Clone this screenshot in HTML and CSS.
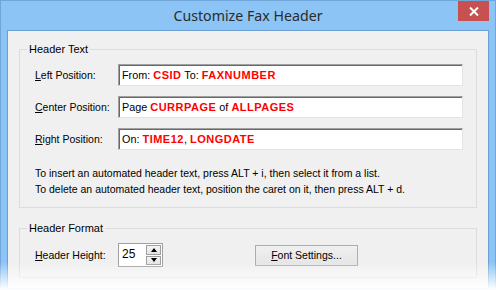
FILE: index.html
```html
<!DOCTYPE html>
<html lang="en">
<head>
    <meta charset="UTF-8">
    <title>Customize Fax Header</title>
    <link rel="stylesheet" href="styles.css">
</head>
<body>
    <div class="window">
        <div class="titlebar">
            <span></span>
            <span class="title">Customize Fax Header</span>
            <button class="close" title="Close">
                <svg width="10" height="9" viewBox="0 0 10 9">
                    <path d="M1 0.5 L9 8.5 M9 0.5 L1 8.5" stroke="#fff" stroke-width="2"/>
                </svg>
            </button>
        </div>

        <div class="client">
            <fieldset class="group">
                <legend>Header Text</legend>
                <div class="fields">
                    <label><u>L</u>eft Position:</label>
                    <div class="edit">From: <b>CSID</b> To: <b>FAXNUMBER</b></div>

                    <label><u>C</u>enter Position:</label>
                    <div class="edit">Page <b>CURRPAGE</b> of <b>ALLPAGES</b></div>

                    <label><u>R</u>ight Position:</label>
                    <div class="edit">On: <b>TIME12</b>, <b>LONGDATE</b></div>
                </div>
                <p class="hint">
                    To insert an automated header text, press ALT + i, then select it from a list.<br>
                    To delete an automated header text, position the caret on it, then press ALT + d.
                </p>
            </fieldset>

            <fieldset class="group">
                <legend>Header Format</legend>
                <div class="format">
                    <label><u>H</u>eader Height:</label>
                    <div class="spin">
                        <span class="spin-value">25</span>
                        <span class="spin-buttons">
                            <span class="spin-btn"><i class="arrow up"></i></span>
                            <span class="spin-btn"><i class="arrow down"></i></span>
                        </span>
                    </div>
                    <button class="push"><u>F</u>ont Settings...</button>
                </div>
            </fieldset>
        </div>

        <div class="fade"></div>
    </div>
</body>
</html>
```

FILE: styles.css
```css
body {
    margin: 0;
    width: 496px;
    height: 290px;
    overflow: hidden;
    font-family: "Liberation Sans", Arial, sans-serif;
    font-size: 10.5px;
    color: #000;
}
.window {
    position: relative;
    box-sizing: border-box;
    height: 290px;
    background-color: #8cc4f6;
    border: 1px solid #70a6da;
    padding: 0 6px;
    display: flex;
    flex-direction: column;
}
.titlebar {
    height: 29px;
    display: grid;
    grid-template-columns: 1fr auto 1fr;
    align-items: start;
}
.title {
    font-family: "Noto Sans", sans-serif;
    font-size: 14.2px;
    color: #2b2b2b;
    line-height: 29px;
}
.close {
    justify-self: end;
    width: 31px;
    height: 20px;
    margin: 0;
    padding: 0;
    border: none;
    background-color: #c75050;
    display: flex;
    align-items: center;
    justify-content: center;
}
.client {
    flex: 1;
    background-color: #f0f0f0;
    border: 1px solid #6e9fd2;
    padding: 12px 11px 0 11px;
}
.group {
    margin: 0;
    border: 1px solid #dcdcdc;
    padding: 8px 13px 10px 15px;
}
.group + .group {
    margin-top: 14px;
}
.group legend {
    padding: 0 2px;
    margin-left: -8px;
    line-height: 13px;
    font-size: 11px;
}
.fields {
    display: grid;
    grid-template-columns: 83px 1fr;
    grid-auto-rows: 22px;
    row-gap: 10px;
    align-items: center;
}
.edit {
    box-sizing: border-box;
    height: 22px;
    background-color: #fff;
    border-top: 1px solid #a0a0a0;
    border-left: 1px solid #a0a0a0;
    border-right: 1px solid #e3e3e3;
    border-bottom: 1px solid #e3e3e3;
    box-shadow: inset 1px 1px 0 #696969;
    padding: 0 3px;
    line-height: 20px;
    white-space: nowrap;
    font-size: 10.8px;
}
.edit b {
    color: #ff0000;
    font-size: 11px;
    letter-spacing: 0.5px;
}
.hint {
    margin: 15px 0 0 0;
    line-height: 16px;
}
.format {
    display: flex;
    align-items: center;
    height: 24px;
}
.format label {
    width: 83px;
}
.spin {
    box-sizing: border-box;
    width: 45px;
    height: 24px;
    background-color: #fff;
    border: 1px solid #a0a0a0;
    display: flex;
    align-items: stretch;
}
.spin-value {
    flex: 1;
    padding: 0 3px;
    line-height: 20px;
    font-size: 12px;
}
.spin-buttons {
    display: flex;
    flex-direction: column;
    gap: 1px;
    padding: 1px;
}
.spin-btn {
    box-sizing: border-box;
    width: 15px;
    flex: 1;
    border: 1px solid #a0a0a0;
    background: linear-gradient(#f4f4f4, #e4e4e4);
    display: flex;
    align-items: center;
    justify-content: center;
}
.arrow {
    width: 0;
    height: 0;
    border-left: 3.5px solid transparent;
    border-right: 3.5px solid transparent;
}
.arrow.up {
    border-bottom: 4px solid #000;
}
.arrow.down {
    border-top: 4px solid #000;
}
.push {
    margin-left: 92px;
    width: 103px;
    height: 21px;
    padding: 0;
    border: 1px solid #adadad;
    background: linear-gradient(#f0f0f0, #e5e5e5);
    font-family: inherit;
    font-size: 10.5px;
    color: #000;
}
.fade {
    position: absolute;
    left: -1px;
    right: -1px;
    bottom: -1px;
    height: 28px;
    background: linear-gradient(rgba(255, 255, 255, 0), #fff);
}
```
